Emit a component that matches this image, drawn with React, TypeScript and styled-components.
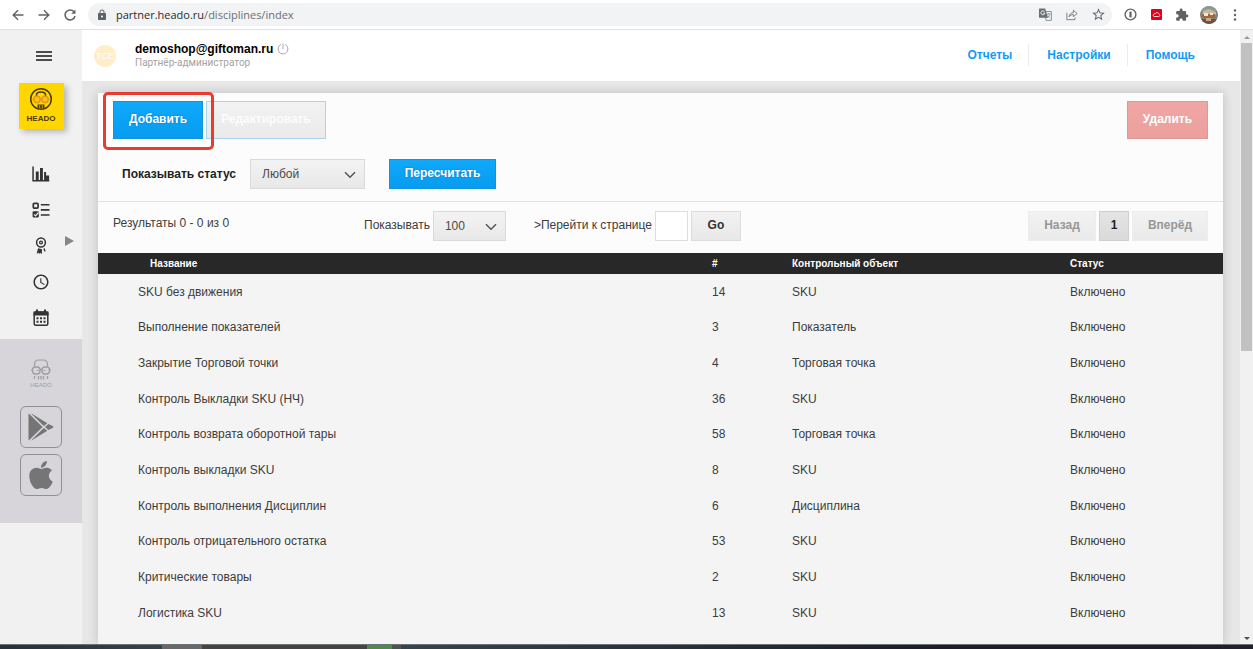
import React from "react";
import styled, { createGlobalStyle, css } from "styled-components";
import { FaApple } from "react-icons/fa";
import { MdAccessTime, MdExtension, MdLock, MdStarBorder } from "react-icons/md";

const Global = createGlobalStyle`
  *, *::before, *::after { box-sizing: border-box; }
  body { margin: 0; font-family: "Liberation Sans", Arial, sans-serif; font-size: 12px; color: #3c3c3c; }
  button, input, select { font: inherit; margin: 0; }
  svg { display: block; }
`;

const Shell = styled.div`
  display: flex;
  flex-direction: column;
  min-height: 100vh;
  background: #f1f1f1;
`;

/* ---------- browser bar ---------- */

const BrowserBar = styled.div`
  display: flex;
  align-items: center;
  height: 30px;
  padding: 0 1px 0 10px;
  background: #fff;
  border-bottom: 1px solid #dfe1e3;
  color: #5f6368;
`;

const BarButton = styled.button<{ $width: number }>`
  display: flex;
  align-items: center;
  justify-content: center;
  width: ${(p) => p.$width}px;
  height: 24px;
  padding: 0;
  border: 0;
  background: none;
  color: inherit;
`;

const Address = styled.div`
  flex: 1;
  display: flex;
  align-items: center;
  gap: 8px;
  height: 23px;
  margin-left: 10px;
  padding: 0 2px 0 8px;
  border-radius: 12px;
  background: #f1f3f4;
`;

const AddressText = styled.div`
  flex: 1;
  font: 11px/20px "Open Sans", sans-serif;
  color: #6b6f73;

  b { font-weight: 400; color: #2a2c2f; }
`;

const Avatar = styled.span`
  display: block;
  width: 18px;
  height: 18px;
  border-radius: 50%;
  overflow: hidden;
`;

/* ---------- page frame ---------- */

const Body = styled.div`
  flex: 1;
  display: flex;
`;

const Sidebar = styled.aside`
  display: flex;
  flex-direction: column;
  align-items: center;
  flex: 0 0 82px;
  padding-top: 16px;
  background: #f1f1f1;
  color: #333;
`;

const MenuButton = styled.button`
  display: flex;
  flex-direction: column;
  gap: 2px;
  width: 16px;
  height: 21px;
  margin: 0 0 0 6px;
  padding: 5px 0;
  border: 0;
  background: none;

  span { height: 2px; background: #4b4b4b; }
`;

const Logo = styled.a`
  display: flex;
  flex-direction: column;
  align-items: center;
  width: 45px;
  height: 46px;
  margin-top: 16px;
  padding-top: 4px;
  background: #ffd600;
  box-shadow: 3px 3px 6px rgba(0, 0, 0, 0.25);
  color: #4a3a05;
  text-decoration: none;
`;

const LogoText = styled.span<{ $small?: boolean }>`
  font-size: 8px;
  font-weight: bold;
  line-height: 16px;
  ${(p) => p.$small && css`font-size: 6px; line-height: 8px; font-weight: 400;`}
`;

const Nav = styled.nav`
  display: flex;
  flex-direction: column;
  align-self: stretch;
  margin-top: 27px;
  padding-bottom: 3px;
`;

const NavLink = styled.a`
  display: grid;
  grid-template-columns: 1fr 18px 1fr;
  align-items: center;
  height: 36px;
  color: #333;
  text-decoration: none;
`;

const NavIcon = styled.span`
  grid-column: 2;
  display: flex;
  justify-content: center;
`;

const NavArrow = styled.span`
  padding: 0 0 10px 15px;
`;

const Apps = styled.div`
  display: flex;
  flex-direction: column;
  align-items: center;
  align-self: stretch;
  height: 184px;
  padding-top: 20px;
  background: #d7d5da;
  color: #9f9da1;
`;

const AppMark = styled.div`
  display: flex;
  flex-direction: column;
  align-items: center;
  height: 47px;
`;

const AppLink = styled.a`
  display: flex;
  align-items: center;
  justify-content: center;
  width: 42px;
  height: 42px;
  margin-bottom: 6px;
  border: 1px solid #929094;
  border-radius: 6px;
  color: #757575;
`;

const Main = styled.div`
  flex: 1;
  display: flex;
  flex-direction: column;
  min-width: 0;
  background: #e7e7e7;
`;

const Header = styled.header`
  display: flex;
  align-items: center;
  height: 51px;
  padding: 0 13px 0 12px;
  background: #fff;
`;

const UserBadge = styled.span`
  display: flex;
  align-items: center;
  justify-content: center;
  width: 22px;
  height: 22px;
  margin-right: 19px;
  border-radius: 50%;
  background: #ffedc8;
  color: #fff;
  font-size: 9px;
`;

const User = styled.div`
  flex: 1;
  line-height: 14px;
`;

const UserName = styled.div`
  display: flex;
  align-items: center;
  gap: 4px;
  color: #000;
  font-weight: bold;
`;

const Role = styled.div`
  color: #a3a3a3;
  font: 10px/14px Roboto, sans-serif;
`;

const TopLinks = styled.nav`
  display: flex;
  margin-right: 16px;
  padding-bottom: 2px;
`;

const TopLink = styled.a`
  padding: 4px 16px 4px 18px;
  border-left: 1px solid #ececec;
  color: #0d9df5;
  font-weight: bold;
  line-height: 14px;
  text-decoration: none;

  &:first-child { border-left: 0; }
`;

/* ---------- panel ---------- */

const Panel = styled.main`
  flex: 1;
  margin: 12px 17px 0 16px;
  background: #f4f4f4;
  box-shadow: 0 0 10px rgba(0, 0, 0, 0.18);
`;

const Actions = styled.div`
  display: flex;
  gap: 3px;
  padding: 8px 15px 0;
  background: #fcfcfc;
`;

const Highlight = styled.div`
  position: relative;
  display: flex;

  &::after {
    content: "";
    position: absolute;
    inset: -9px -11px -11px -10px;
    border: 3px solid #e93b30;
    border-radius: 5px;
    pointer-events: none;
  }
`;

type Tone = "blue" | "ghost" | "red" | "grey" | "muted" | "current";

const tones = {
  blue: css`
    background: linear-gradient(#10a9fb, #069cef);
    border-color: #1593da;
    color: #fff;
    text-shadow: 0 0 2px rgba(0, 60, 120, 0.4);
  `,
  ghost: css`
    background: linear-gradient(#f2f2f2, #eaeaea);
    border-color: #a9d5ec;
    color: #fcfcfc;
  `,
  red: css`
    background: linear-gradient(#f0a6a4, #eba09e);
    border-color: #dc9997;
    color: #fff;
  `,
  grey: css`
    background: linear-gradient(#f2f2f2, #e8e8e8);
    border-color: #dcdcdc;
    color: #333;
  `,
  muted: css`
    background: linear-gradient(#f2f2f2, #eaeaea);
    border-color: #ededed;
    color: #979797;
  `,
  current: css`
    background: linear-gradient(#e4e4e4, #dadada);
    border-color: #cfcfcf;
    color: #222;
  `,
};

const Button = styled.button<{ $tone: Tone; $width: number; $tall?: boolean }>`
  width: ${(p) => p.$width}px;
  height: ${(p) => (p.$tall ? 38 : 30)}px;
  padding: 0 0 2px;
  border: 1px solid;
  font-weight: bold;
  text-align: center;
  ${(p) => tones[p.$tone]}
`;

const Spacer = styled.span`
  flex: 1;
`;

const Filters = styled.div`
  display: flex;
  align-items: center;
  gap: 20px;
  height: 63px;
  padding: 8px 24px 0;
  background: #fcfcfc;
  border-bottom: 1px solid #e1e1e1;
`;

const FilterLabel = styled.label`
  width: 108px;
  color: #222;
  font-weight: bold;
  white-space: nowrap;
`;

const SelectBox = styled.span<{ $width: number }>`
  position: relative;
  display: block;
  width: ${(p) => p.$width}px;
  margin-right: 4px;

  select {
    appearance: none;
    display: block;
    width: 100%;
    height: 30px;
    padding: 0 11px;
    border: 1px solid #dadada;
    border-radius: 0;
    background: linear-gradient(#f3f3f3, #e8e8e8);
    color: #4a4a4a;
  }

  svg {
    position: absolute;
    top: 12px;
    right: 9px;
    pointer-events: none;
  }
`;

const Pager = styled.div`
  display: flex;
  align-items: center;
  height: 51px;
  padding: 0 15px 4px;
  background: #fcfcfc;
`;

const Results = styled.span`
  flex: 0 0 251px;
  padding-bottom: 6px;
`;

const PagerGroup = styled.div`
  display: flex;
  align-items: center;
  gap: 3px;
  margin-right: 24px;
  white-space: nowrap;

  label { padding-bottom: 2px; }
`;

const PageInput = styled.input`
  width: 33px;
  height: 30px;
  padding: 0 4px;
  border: 1px solid #dedede;
  background: #fff;
`;

const Pages = styled.div`
  display: flex;
  gap: 3px;
  margin-left: auto;
`;

const Table = styled.table`
  width: 100%;
  table-layout: fixed;
  border-collapse: collapse;

  th {
    height: 21px;
    padding: 0;
    background: #282828;
    color: #fff;
    font-size: 10px;
    line-height: 12px;
    text-align: left;
  }
  th:first-child { padding-left: 52px; }

  td { height: 36px; padding: 0; line-height: 14px; }
  td:first-child { padding-left: 40px; }
  tbody tr:nth-child(3n + 1) td { height: 35px; }
`;

const Col = styled.col<{ $width?: number }>`
  width: ${(p) => (p.$width ? `${p.$width}px` : "auto")};
`;

/* ---------- scrollbar and taskbar ---------- */

const ScrollTrack = styled.div`
  flex: 0 0 13px;
  display: flex;
  flex-direction: column;
  align-items: center;
  padding: 6px 0 4px;
  background: #f1f1f1;
`;

const Thumb = styled.div`
  flex: 0 0 51%;
  width: 11px;
  margin: 4px 0 auto;
  background: #c1c1c1;
`;

const Taskbar = styled.footer`
  height: 5px;
  border-top: 1px solid #6b7377;
  background: linear-gradient(
    90deg,
    #23333c 0, #34444c 162px,
    #66686b 162px, #66686b 202px,
    #454343 202px, #454343 367px,
    #4f8a4b 367px, #4f8a4b 392px,
    #505154 392px, #505154 401px,
    #35444c 401px, #1c1d26 75%, #20212b 100%
  );
`;

/* ---------- drawings ---------- */

const Arrow = ({ back }: { back?: boolean }) => (
  <svg width="12" height="12" viewBox="0 0 12 12" fill="none" stroke="currentColor" strokeWidth="1.4">
    {back ? <path d="M11.5 6H1.5M6 1.2L1.2 6L6 10.8" /> : <path d="M.5 6h10M6 1.2L10.8 6L6 10.8" />}
  </svg>
);

const Reload = () => (
  <svg width="12" height="12" viewBox="0 0 12 12" fill="none" stroke="currentColor" strokeWidth="1.5">
    <path d="M9.8 2.6A5 5 0 1 0 11 7" />
    <path d="M11.5 .4v4.4H7.1z" fill="currentColor" stroke="none" />
  </svg>
);

const Translate = () => (
  <svg width="13" height="13" viewBox="0 0 13 13" fill="none">
    <path d="M6 3.5h6.400v8.900H7z" stroke="#85898d" strokeWidth=".9" />
    <path d="M7.800 6h3.800M9.700 5v1M11 6.200c-.5 1.800-1.500 2.800-2.800 3.600M8.700 7.500l2.300 2.300" stroke="#85898d" strokeWidth=".8" />
    <path d="M0 1Q0 .4.600.4H6.200L9 9.800H.6Q0 9.800 0 9.200z" fill="#6a6e72" />
    <path d="M5.600 3.700A2 2 0 1 0 5.900 5.200H4.200" stroke="#fff" strokeWidth=".9" />
  </svg>
);

const Share = () => (
  <svg width="14" height="13" viewBox="0 0 14 13" fill="none" stroke="currentColor" strokeWidth=".9">
    <path d="M1 4.500v8h9.500V10" />
    <path d="M3.500 9.2C4 6 6 4.5 8.6 4.4V1.6L13 5.4L8.6 9V6.6C6.4 6.6 4.8 7.4 3.5 9.2z" />
  </svg>
);

const OneCircle = () => (
  <svg width="13" height="13" viewBox="0 0 13 13" fill="none" stroke="currentColor">
    <circle cx="6.5" cy="6.5" r="5.4" strokeWidth="1.4" />
    <path d="M6.5 3.6v5.8" strokeWidth="2.2" />
  </svg>
);

const RedCloud = () => (
  <svg width="11" height="11" viewBox="0 0 11 11">
    <rect width="11" height="11" rx="1" fill="#e2001a" />
    <path d="M3.100 7.500h4.800a1.200 1.200 0 0 0 .1-2.300A2 2 0 0 0 4.200 4.800A1.400 1.400 0 0 0 3.100 7.500z" fill="none" stroke="#fff" strokeWidth=".8" />
  </svg>
);

const Photo = () => (
  <svg width="18" height="18" viewBox="0 0 18 18">
    <rect width="18" height="18" fill="#7d8577" />
    <path d="M0 0h18v5H0z" fill="#8b9a98" />
    <path d="M3 5l6-2 7 3v3H2z" fill="#c9b79c" />
    <path d="M2 8h13v4H2z" fill="#a3673f" />
    <path d="M4 7h4v3H4zM10 7h3v2h-3z" fill="#efe9dd" />
    <path d="M0 13h18v5H0z" fill="#6b5340" />
    <path d="M6 12h5v3H6z" fill="#c3a98a" />
  </svg>
);

const Dots = () => (
  <svg width="4" height="12" viewBox="0 0 4 12" fill="currentColor">
    <circle cx="2" cy="1.5" r="1.2" /><circle cx="2" cy="6" r="1.2" /><circle cx="2" cy="10.5" r="1.2" />
  </svg>
);

const Power = () => (
  <svg width="12" height="12" viewBox="0 0 12 12" fill="none" stroke="#aaa" strokeLinecap="round">
    <path d="M3.7 1.5a5 5 0 1 0 4.6 0M6 .8v5" />
  </svg>
);

const LogoFace = () => (
  <svg width="24" height="24" viewBox="0 0 24 24">
    <circle cx="12" cy="12" r="10.3" fill="none" stroke="#4a3a05" strokeWidth="1.5" />
    <path d="M7.500 10V8Q7.500 5 12 5T16.500 8V10" fill="none" stroke="#4a3a05" strokeWidth="1.5" />
    <path d="M3.5 12.500h17" stroke="#e69a10" strokeWidth="1.5" />
    <circle cx="8" cy="12.5" r="3.2" fill="#ffbf1c" stroke="#e69a10" strokeWidth="1.5" />
    <circle cx="16" cy="12.5" r="3.2" fill="#ffbf1c" stroke="#e69a10" strokeWidth="1.5" />
    <path d="M8.5 17.5h7v4h-7z" fill="#4a3a05" />
    <path d="M10.7 18v3.5M13.3 18v3.5" stroke="#ffd600" strokeWidth=".7" />
  </svg>
);

const GreyFace = () => (
  <svg width="20" height="22" viewBox="0 0 20 22" fill="none" stroke="currentColor">
    <path d="M3.5 7.500V5.500Q3.500 1 8 1h4q4.500 0 4.500 4.500v2" strokeWidth="1.2" />
    <rect x="1.5" y="8" width="7.5" height="7" rx="3" strokeWidth="1.4" />
    <rect x="11" y="8" width="7.5" height="7" rx="3" strokeWidth="1.4" />
    <path d="M9 10.500h2M0 11h1.500M18.500 11H20M5.500 11.500h2M12.500 11.500h2" />
    <path d="M3.500 17v3M7.500 17v3.500M10 17v3.500M12.500 17v3.500M16.500 17v3" strokeWidth="1.3" />
  </svg>
);

const Chart = () => (
  <svg width="18" height="16" viewBox="0 0 18 16" fill="currentColor">
    <path d="M.3.5h1.500v13.500h15.500v1.500H.3z" />
    <path d="M3.800 5.500h2.900v9H3.800zM8 2h2.900v12.500H8zM12.100 6h2v8.500h-2zM14.100 9.500h3v5h-3z" />
  </svg>
);

const Checklist = () => (
  <svg width="18" height="16" viewBox="0 0 18 16" fill="none" stroke="currentColor" strokeWidth="1.7">
    <rect x="1.3" y="1.3" width="4.800" height="4.800" rx="1" />
    <rect x=".6" y="9.200" width="6.200" height="6.200" rx="1" fill="currentColor" stroke="none" />
    <path d="M2 12.300l1.500 1.500L6.500 10.500" stroke="#f1f1f1" strokeWidth="1.200" />
    <path d="M8.800 2.800h8.700M8.800 7.900h8.700M8.800 13h8.700" strokeWidth="1.6" />
  </svg>
);

const Award = () => (
  <svg width="18" height="18" viewBox="0 0 18 18" fill="none" stroke="currentColor">
    <circle cx="9" cy="5.500" r="4.400" strokeWidth="1.5" />
    <circle cx="9" cy="5.500" r="1.400" strokeWidth="1.3" />
    <path d="M6 11.300l4 1-.2 4.900-1.600-1.500-1 1.300-.8-1.400L4.600 17zM11.500 11.500l1.200-.2L13.700 14.500l-1.700-.3z" fill="currentColor" stroke="none" />
  </svg>
);

const Calendar = () => (
  <svg width="18" height="18" viewBox="0 0 18 18">
    <rect x="2.200" y="3" width="13.600" height="13.300" rx="1.500" fill="none" stroke="currentColor" strokeWidth="1.5" />
    <path d="M1.500 2.500h15v4h-15zM4 .5h2v3H4zM12 .5h2v3h-2z" fill="currentColor" />
    <path d="M4.500 9.300h9M4.500 12.800h9" stroke="currentColor" strokeWidth="2" strokeDasharray="2 1.5" />
  </svg>
);

const PlayStore = () => (
  <svg width="26" height="28" viewBox="0 0 26 28" fill="currentColor">
    <path d="M.5 1.500Q.5 .3 1.500 1.200L14.600 14L1.500 26.800Q.5 27.700 .5 26.500z" />
    <path d="M3.500 .5L19.300 10.200L15.800 13L3.500 1.100zM3.500 27.500L19.300 17.800L15.800 15L3.500 26.900z" />
    <path d="M20.400 10.900L25 13.300Q26 14 25 14.700L20.400 17.100L17 14z" />
  </svg>
);

const Chevron = () => (
  <svg width="12" height="8" viewBox="0 0 12 8" fill="none" stroke="#555" strokeWidth="1.5">
    <path d="M1 1.200L6 6.200L11 1.200" />
  </svg>
);

const Triangle = ({ dir }: { dir: "up" | "down" | "right" }) =>
  dir === "right" ? (
    <svg width="9" height="10" viewBox="0 0 9 10"><path d="M0 0L9 5L0 10z" fill="#868686" /></svg>
  ) : (
    <svg width="6" height="3" viewBox="0 0 6 3">
      <path d={dir === "up" ? "M0 3L3 0L6 3z" : "M0 0H6L3 3z"} fill={dir === "up" ? "#9a9a9a" : "#505050"} />
    </svg>
  );

/* ---------- data ---------- */

const rows: [string, number, string][] = [
  ["SKU без движения", 14, "SKU"],
  ["Выполнение показателей", 3, "Показатель"],
  ["Закрытие Торговой точки", 4, "Торговая точка"],
  ["Контроль Выкладки SKU (НЧ)", 36, "SKU"],
  ["Контроль возврата оборотной тары", 58, "Торговая точка"],
  ["Контроль выкладки SKU", 8, "SKU"],
  ["Контроль выполнения Дисциплин", 6, "Дисциплина"],
  ["Контроль отрицательного остатка", 53, "SKU"],
  ["Критические товары", 2, "SKU"],
  ["Логистика SKU", 13, "SKU"],
];

const navItems = [
  { label: "Отчёты", icon: <Chart /> },
  { label: "Задачи", icon: <Checklist /> },
  { label: "Достижения", icon: <Award />, more: true },
  { label: "История", icon: <MdAccessTime size={20} /> },
  { label: "Календарь", icon: <Calendar /> },
];

export default function App() {
  return (
    <Shell>
      <Global />
      <BrowserBar>
        <BarButton $width={16} aria-label="Back"><Arrow back /></BarButton>
        <BarButton $width={36} aria-label="Forward"><Arrow /></BarButton>
        <BarButton $width={16} aria-label="Reload"><Reload /></BarButton>
        <Address>
          <MdLock size={12} />
          <AddressText><b>partner.heado.ru</b>/disciplines/index</AddressText>
          <BarButton $width={26} aria-label="Translate"><Translate /></BarButton>
          <BarButton $width={12} aria-label="Share"><Share /></BarButton>
          <BarButton $width={24} aria-label="Bookmark"><MdStarBorder size={15} /></BarButton>
        </Address>
        <BarButton $width={36} aria-label="Password manager"><OneCircle /></BarButton>
        <BarButton $width={16} aria-label="Cloud"><RedCloud /></BarButton>
        <BarButton $width={36} aria-label="Extensions"><MdExtension size={14} /></BarButton>
        <BarButton $width={18} aria-label="Profile"><Avatar><Photo /></Avatar></BarButton>
        <BarButton $width={34} aria-label="Menu"><Dots /></BarButton>
      </BrowserBar>

      <Body>
        <Sidebar>
          <MenuButton aria-label="Меню"><span /><span /><span /></MenuButton>
          <Logo href="#">
            <LogoFace />
            <LogoText>HEADO</LogoText>
          </Logo>
          <Nav>
            {navItems.map((item) => (
              <NavLink href="#" key={item.label} aria-label={item.label}>
                <NavIcon>{item.icon}</NavIcon>
                {item.more && <NavArrow><Triangle dir="right" /></NavArrow>}
              </NavLink>
            ))}
          </Nav>
          <Apps>
            <AppMark>
              <GreyFace />
              <LogoText $small>HEADO</LogoText>
            </AppMark>
            <AppLink href="#" aria-label="Google Play"><PlayStore /></AppLink>
            <AppLink href="#" aria-label="App Store"><FaApple size={32} /></AppLink>
          </Apps>
        </Sidebar>

        <Main>
          <Header>
            <UserBadge>TCE</UserBadge>
            <User>
              <UserName>demoshop@giftoman.ru <Power /></UserName>
              <Role>Партнёр-администратор</Role>
            </User>
            <TopLinks>
              <TopLink href="#">Отчеты</TopLink>
              <TopLink href="#">Настройки</TopLink>
              <TopLink href="#">Помощь</TopLink>
            </TopLinks>
          </Header>

          <Panel>
            <Actions>
              <Highlight><Button $tone="blue" $width={90} $tall>Добавить</Button></Highlight>
              <Button $tone="ghost" $width={120} $tall>Редактировать</Button>
              <Spacer />
              <Button $tone="red" $width={81} $tall>Удалить</Button>
            </Actions>

            <Filters>
              <FilterLabel htmlFor="status">Показывать статус</FilterLabel>
              <SelectBox $width={115}>
                <select id="status"><option>Любой</option></select>
                <Chevron />
              </SelectBox>
              <Button $tone="blue" $width={107}>Пересчитать</Button>
            </Filters>

            <Pager>
              <Results>Результаты 0 - 0 из 0</Results>
              <PagerGroup>
                <label htmlFor="size">Показывать</label>
                <SelectBox $width={73}>
                  <select id="size"><option>100</option></select>
                  <Chevron />
                </SelectBox>
              </PagerGroup>
              <PagerGroup>
                <label htmlFor="page">&gt;Перейти к странице</label>
                <PageInput id="page" type="text" />
                <Button $tone="grey" $width={50}>Go</Button>
              </PagerGroup>
              <Pages>
                <Button $tone="muted" $width={68}>Назад</Button>
                <Button $tone="current" $width={30}>1</Button>
                <Button $tone="muted" $width={76}>Вперёд</Button>
              </Pages>
            </Pager>

            <Table>
              <colgroup>
                <Col /><Col $width={80} /><Col $width={278} /><Col $width={153} />
              </colgroup>
              <thead>
                <tr>
                  <th scope="col">Название</th>
                  <th scope="col">#</th>
                  <th scope="col">Контрольный объект</th>
                  <th scope="col">Статус</th>
                </tr>
              </thead>
              <tbody>
                {rows.map(([name, count, target]) => (
                  <tr key={name}>
                    <td>{name}</td>
                    <td>{count}</td>
                    <td>{target}</td>
                    <td>Включено</td>
                  </tr>
                ))}
              </tbody>
            </Table>
          </Panel>
        </Main>

        <ScrollTrack>
          <Triangle dir="up" />
          <Thumb />
          <Triangle dir="down" />
        </ScrollTrack>
      </Body>
      <Taskbar />
    </Shell>
  );
}
